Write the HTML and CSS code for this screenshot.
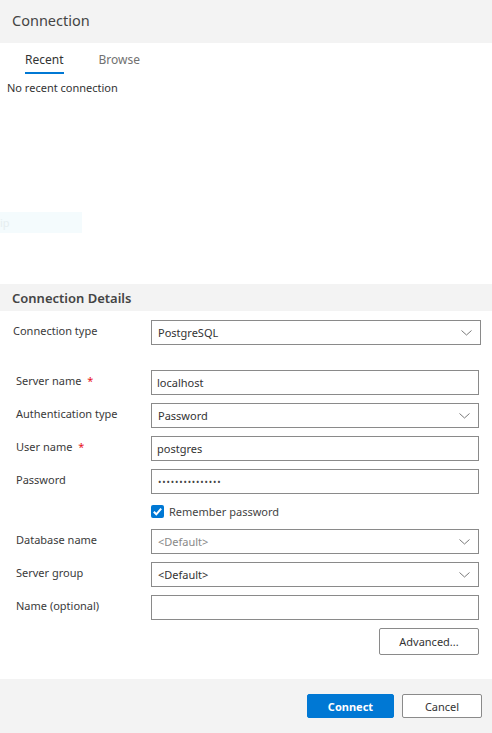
FILE: index.html
```html
<!DOCTYPE html>
<html>
<head>
<meta charset="utf-8">
<link rel="stylesheet" href="styles.css">
</head>
<body>
<div class="app">
  <header class="title-bar"><h1 class="title">Connection</h1></header>
  <nav class="tabs">
    <span class="tab active">Recent</span>
    <span class="tab">Browse</span>
  </nav>
  <section class="recent">
    <p class="empty">No recent connection</p>
    <div class="ghost">ip</div>
  </section>
  <div class="section-head">Connection Details</div>
  <div class="details">
    <div class="row first">
      <label class="lbl lbl-first">Connection type</label>
      <div class="ctl select wide"><span class="val">PostgreSQL</span><svg class="chev" width="11" height="6" viewBox="0 0 11 6"><path d="M0.5 0.5 L5.5 5 L10.5 0.5" fill="none" stroke="#7a7a7a" stroke-width="1"/></svg></div>
    </div>
    <div class="row">
      <label class="lbl">Server name <span class="req">*</span></label>
      <div class="ctl"><span class="val">localhost</span></div>
    </div>
    <div class="row">
      <label class="lbl">Authentication type</label>
      <div class="ctl select"><span class="val">Password</span><svg class="chev" width="11" height="6" viewBox="0 0 11 6"><path d="M0.5 0.5 L5.5 5 L10.5 0.5" fill="none" stroke="#7a7a7a" stroke-width="1"/></svg></div>
    </div>
    <div class="row">
      <label class="lbl">User name <span class="req">*</span></label>
      <div class="ctl"><span class="val">postgres</span></div>
    </div>
    <div class="row">
      <label class="lbl">Password</label>
      <div class="ctl"><span class="val dots">•••••••••••••••</span></div>
    </div>
    <div class="check-row">
      <span class="box"><svg width="13" height="13" viewBox="0 0 13 13"><path d="M2.8 6.8 L5.3 9.3 L10.2 3.6" fill="none" stroke="#fff" stroke-width="2"/></svg></span>
      <span class="check-text">Remember password</span>
    </div>
    <div class="row">
      <label class="lbl">Database name</label>
      <div class="ctl select"><span class="val placeholder">&lt;Default&gt;</span><svg class="chev" width="11" height="6" viewBox="0 0 11 6"><path d="M0.5 0.5 L5.5 5 L10.5 0.5" fill="none" stroke="#7a7a7a" stroke-width="1"/></svg></div>
    </div>
    <div class="row">
      <label class="lbl">Server group</label>
      <div class="ctl select"><span class="val">&lt;Default&gt;</span><svg class="chev" width="11" height="6" viewBox="0 0 11 6"><path d="M0.5 0.5 L5.5 5 L10.5 0.5" fill="none" stroke="#7a7a7a" stroke-width="1"/></svg></div>
    </div>
    <div class="row">
      <label class="lbl">Name (optional)</label>
      <div class="ctl"></div>
    </div>
    <div class="adv-row"><button class="btn adv">Advanced...</button></div>
  </div>
  <footer class="footer">
    <button class="btn primary">Connect</button>
    <button class="btn cancel">Cancel</button>
  </footer>
</div>
</body>
</html>
```
FILE: styles.css
```css
* { box-sizing: border-box; }
html, body { margin: 0; padding: 0; background: #fff; }
body { font-family: "Noto Sans", "Open Sans", sans-serif; color: #333; }
.app { width: 492px; height: 733px; display: flex; flex-direction: column; overflow: hidden; }
.title-bar { height: 43px; background: #f3f3f3; display: flex; align-items: center; padding: 0 0 4px 12px; }
.title { margin: 0; font-size: 14.5px; font-weight: 400; color: #444; line-height: 20px; }
.tabs { height: 31px; display: flex; padding-left: 25px; gap: 35px; align-items: flex-end; }
.tab { font-size: 12px; line-height: 16px; color: #717171; padding-bottom: 4px; border-bottom: 2px solid transparent; height: 22px; display: flex; align-items: flex-end; }
.tab.active { color: #333; border-bottom-color: #0078d4; }
.recent { height: 210px; padding-top: 6px; }
.empty { margin: 0 0 0 7px; font-size: 11px; line-height: 16px; color: #333; }
.ghost { margin-top: 116px; width: 82px; height: 21px; background: #f4fbfd; color: #e6eef0; font-size: 11px; line-height: 21px; }
.section-head { height: 27px; background: #f3f3f3; padding-left: 12px; font-size: 13px; font-weight: 600; color: #444; line-height: 28px; }
.details { flex: 1; display: flex; flex-direction: column; padding-top: 9px; }
.row { display: flex; align-items: center; height: 25px; margin-bottom: 8px; }
.row.first { margin-bottom: 25px; }
.lbl { width: 151px; padding-left: 16px; font-size: 11px; color: #3a3a3a; line-height: 16px; margin-top: -3px; }
.lbl-first { padding-left: 13px; }
.req { color: #e81123; margin-left: 3px; }
.ctl { width: 328px; height: 25px; border: 1px solid #8a8a8a; display: flex; align-items: center; padding: 0 8px 0 5px; font-size: 11px; color: #333; }
.ctl.wide { width: 330px; }
.val { flex: 1; }
.select .val { padding-left: 1px; }
.placeholder { color: #888; }
.dots { font-size: 9px; letter-spacing: 0.85px; color: #444; padding-left: 1px; }
.chev { flex: none; }
.check-row { display: flex; align-items: center; margin: 3px 0 11px 151px; height: 13px; gap: 5px; }
.box { width: 13px; height: 13px; border-radius: 2px; background: #0078d4; display: flex; align-items: center; justify-content: center; overflow: hidden; }
.box svg { width: 13px; height: 13px; }
.check-text { font-size: 11px; color: #444; line-height: 16px; }
.adv-row { display: flex; justify-content: flex-end; padding-right: 13px; }
.btn { font-family: inherit; font-size: 11px; background: #fff; border: 1px solid #8a8a8a; color: #333; border-radius: 2px; padding: 0; }
.adv { width: 100px; height: 27px; }
.footer { height: 54px; background: #f3f3f3; display: flex; justify-content: flex-end; align-items: flex-start; padding: 15px 10px 0 0; gap: 8px; }
.primary { width: 87px; height: 24px; background: #0078d4; border-color: #0078d4; color: #fff; font-weight: 700; }
.cancel { width: 80px; height: 24px; }
```
